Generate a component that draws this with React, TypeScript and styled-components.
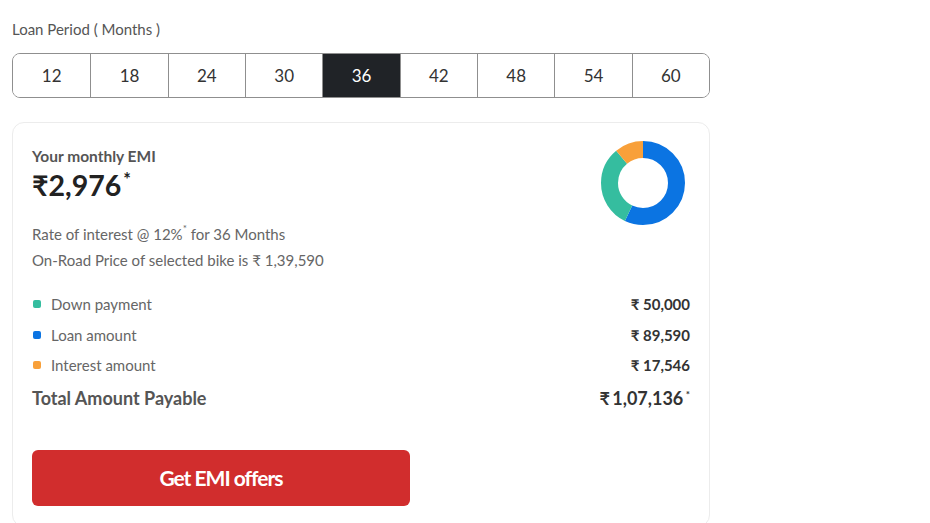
import { FC, useState } from "react";
import styled, { createGlobalStyle } from "styled-components";

const GlobalStyle = createGlobalStyle`
	*, *::before, *::after {
		box-sizing: border-box;
	}
	body {
		margin: 0;
		background: #fff;
		font-family: Lato, "Open Sans", Arial, sans-serif;
	}
`;

const PERIODS = [12, 18, 24, 30, 36, 42, 48, 54, 60];

const PARTS = [
	{ label: "Down payment", value: 50000, color: "#35bd9f" },
	{ label: "Loan amount", value: 89590, color: "#0b74e2" },
	{ label: "Interest amount", value: 17546, color: "#f8a03a" },
];

const fmt = (n: number) => {
	const s = n.toString();
	if (s.length <= 3) return s;
	const last = s.slice(-3);
	const rest = s.slice(0, -3).replace(/\B(?=(\d{2})+(?!\d))/g, ",");
	return `${rest},${last}`;
};

const Donut: FC = () => {
	const r = 33.5;
	const c = 2 * Math.PI * r;
	// order round the ring, clockwise from 12 o'clock
	const order = [PARTS[1], PARTS[0], PARTS[2]];
	const total = order.reduce((a, p) => a + p.value, 0);
	let offset = 0;
	return (
		<DonutSvg width='84' height='84' viewBox='0 0 84 84'>
			<g transform='rotate(-90 42 42)'>
				{order.map((p) => {
					const len = (p.value / total) * c;
					const el = (
						<circle
							key={p.label}
							cx='42'
							cy='42'
							r={r}
							fill='none'
							stroke={p.color}
							strokeWidth='17'
							strokeDasharray={`${len} ${c - len}`}
							strokeDashoffset={-offset}
						/>
					);
					offset += len;
					return el;
				})}
			</g>
		</DonutSvg>
	);
};

const App: FC = () => {
	const [period, setPeriod] = useState(36);
	const total = PARTS[1].value + PARTS[2].value;

	return (
		<Page>
			<GlobalStyle />
			<Label>Loan Period ( Months )</Label>
			<Segments>
				{PERIODS.map((p) => (
					<Segment key={p} active={p === period} onClick={() => setPeriod(p)}>
						{p}
					</Segment>
				))}
			</Segments>

			<Card>
				<Header>
					<div>
						<Title>Your monthly EMI</Title>
						<Amount>
							₹2,976<sup>*</sup>
						</Amount>
						<Info style={{ marginTop: 20 }}>
							Rate of interest @ 12%<Star>*</Star> for {period} Months
						</Info>
						<Info>On-Road Price of selected bike is ₹ 1,39,590</Info>
					</div>
					<Donut />
				</Header>

				<Breakdown>
					{PARTS.map((p) => (
						<Row key={p.label}>
							<Legend>
								<Dot color={p.color} />
								{p.label}
							</Legend>
							<Value>₹ {fmt(p.value)}</Value>
						</Row>
					))}
					<TotalRow>
						<span>Total Amount Payable</span>
						<span>
							₹{"\u2009"}
							{fmt(total)}
							<Star> *</Star>
						</span>
					</TotalRow>
				</Breakdown>

				<OfferButton>Get EMI offers</OfferButton>
			</Card>
		</Page>
	);
};

const Page = styled.div`
	padding: 19px 0 0 12px;
	width: 710px;
`;

const Label = styled.div`
	font-size: 15px;
	line-height: 20px;
	color: #555;
`;

const Segments = styled.div`
	margin-top: 14px;
	display: grid;
	grid-template-columns: repeat(9, 1fr);
	height: 45px;
	border: 1px solid #8f8f8f;
	border-radius: 8px;
	overflow: hidden;
`;

const Segment = styled.button<{ active?: boolean }>`
	border: none;
	border-left: 1px solid #8f8f8f;
	background: ${(p) => (p.active ? "#202327" : "#fff")};
	color: ${(p) => (p.active ? "#fff" : "#333")};
	font-family: Lato, Arial, sans-serif;
	font-size: 17px;
	padding: 0;
	cursor: pointer;

	&:first-child {
		border-left: none;
	}
`;

const Card = styled.div`
	margin-top: 24px;
	border: 1px solid #ececec;
	border-radius: 12px;
	padding: 23px 19px 20px 19px;
`;

const Header = styled.div`
	display: flex;
	justify-content: space-between;
	align-items: flex-start;
`;

const DonutSvg = styled.svg`
	margin-top: -5px;
	margin-right: 5px;
	display: block;
`;

const Title = styled.div`
	font-size: 15.5px;
	line-height: 20px;
	font-weight: 700;
	color: #555;
`;

const Amount = styled.div`
	margin-top: 3px;
	font-size: 28.5px;
	line-height: 32px;
	font-weight: 700;
	color: #222;

	sup {
		font-size: 18px;
		vertical-align: top;
		line-height: 20px;
		margin-left: 2px;
	}
`;

const Info = styled.div`
	font-size: 15px;
	line-height: 26px;
	color: #666;
`;

const Star = styled.sup`
	font-size: 10px;
	vertical-align: top;
	line-height: 14px;
`;

const Breakdown = styled.div`
	margin-top: 16px;
`;

const Row = styled.div`
	display: flex;
	justify-content: space-between;
	align-items: center;
	height: 30.5px;
	font-size: 15px;
`;

const Legend = styled.div`
	display: flex;
	align-items: center;
	gap: 10px;
	color: #666;
	padding-left: 1px;
`;

const Dot = styled.span<{ color: string }>`
	width: 8px;
	height: 8px;
	border-radius: 2px;
	background: ${(p) => p.color};
`;

const Value = styled.span`
	font-weight: 700;
	color: #333;
`;

const TotalRow = styled.div`
	display: flex;
	justify-content: space-between;
	align-items: center;
	height: 34px;
	font-size: 18px;
	font-weight: 700;
	color: #555;

	span:last-child {
		color: #333;
	}
`;

const OfferButton = styled.button`
	margin-top: 35px;
	width: 378px;
	height: 56px;
	border: none;
	border-radius: 6px;
	background: #d12d2d;
	color: #fff;
	font-family: Lato, Arial, sans-serif;
	font-size: 21px;
	font-weight: 700;
	letter-spacing: -1px;
	cursor: pointer;
`;

export default App;
